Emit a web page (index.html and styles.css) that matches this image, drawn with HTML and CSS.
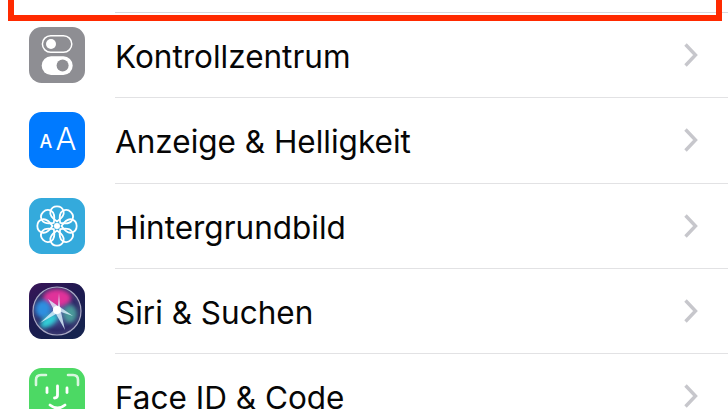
FILE: index.html
```html
<!DOCTYPE html>
<html lang="de">
<head>
<meta charset="utf-8">
<title>Einstellungen</title>
<link rel="stylesheet" href="styles.css">
</head>
<body>
<div class="screen">
  <div class="stub"><div class="stub-line"></div></div>
  <div class="frame"></div>

  <div class="row">
    <svg class="icon" viewBox="0 0 56 56">
      <rect width="56" height="56" rx="12.5" fill="#8e8e93"/>
      <rect x="13.4" y="8.7" width="29.4" height="16.6" rx="8.3" fill="none" stroke="#fff" stroke-width="1.5"/>
      <circle cx="22" cy="17" r="5" fill="#fff"/>
      <rect x="12.7" y="29.3" width="31" height="18.7" rx="9.35" fill="#fff"/>
      <circle cx="33.6" cy="38.6" r="6" fill="#8e8e93"/>
    </svg>
    <div class="body"><span class="label">Kontrollzentrum</span>
      <svg class="chev" viewBox="0 0 16 26"><path d="M2.5 2.5 12.5 13 2.5 23.5"/></svg></div>
  </div>

  <div class="row">
    <svg class="icon" viewBox="0 0 56 56">
      <rect width="56" height="56" rx="12.5" fill="#007aff"/>
      <text x="17" y="36" class="aa small">A</text>
      <text x="37" y="38" class="aa big">A</text>
    </svg>
    <div class="body"><span class="label">Anzeige &amp; Helligkeit</span>
      <svg class="chev" viewBox="0 0 16 26"><path d="M2.5 2.5 12.5 13 2.5 23.5"/></svg></div>
  </div>

  <div class="row">
    <svg class="icon" viewBox="0 0 56 56">
      <rect width="56" height="56" rx="12.5" fill="#34aadc"/>
      <g fill="none" stroke="#fff" stroke-width="1.8" transform="translate(28 28)">
        <circle r="3" fill="#fff" stroke="none"/>
        <path d="M0-4.5C-6.5-9-7-13-6.6-14.5A6.8 6.8 0 0 1 6.6-14.5C7-13 6.5-9 0-4.5Z"/>
        <path d="M0-4.5C-6.5-9-7-13-6.6-14.5A6.8 6.8 0 0 1 6.6-14.5C7-13 6.5-9 0-4.5Z" transform="rotate(45)"/>
        <path d="M0-4.5C-6.5-9-7-13-6.6-14.5A6.8 6.8 0 0 1 6.6-14.5C7-13 6.5-9 0-4.5Z" transform="rotate(90)"/>
        <path d="M0-4.5C-6.5-9-7-13-6.6-14.5A6.8 6.8 0 0 1 6.6-14.5C7-13 6.5-9 0-4.5Z" transform="rotate(135)"/>
        <path d="M0-4.5C-6.5-9-7-13-6.6-14.5A6.8 6.8 0 0 1 6.6-14.5C7-13 6.5-9 0-4.5Z" transform="rotate(180)"/>
        <path d="M0-4.5C-6.5-9-7-13-6.6-14.5A6.8 6.8 0 0 1 6.6-14.5C7-13 6.5-9 0-4.5Z" transform="rotate(225)"/>
        <path d="M0-4.5C-6.5-9-7-13-6.6-14.5A6.8 6.8 0 0 1 6.6-14.5C7-13 6.5-9 0-4.5Z" transform="rotate(270)"/>
        <path d="M0-4.5C-6.5-9-7-13-6.6-14.5A6.8 6.8 0 0 1 6.6-14.5C7-13 6.5-9 0-4.5Z" transform="rotate(315)"/>
      </g>
    </svg>
    <div class="body"><span class="label">Hintergrundbild</span>
      <svg class="chev" viewBox="0 0 16 26"><path d="M2.5 2.5 12.5 13 2.5 23.5"/></svg></div>
  </div>

  <div class="row">
    <svg class="icon" viewBox="0 0 56 56">
      <defs>
        <linearGradient id="sbg" x1="0" y1="0" x2="0.6" y2="1">
          <stop offset="0" stop-color="#3a1558"/><stop offset="0.5" stop-color="#1d1a50"/><stop offset="1" stop-color="#16234f"/>
        </linearGradient>
        <radialGradient id="sdisc" cx="0.5" cy="0.5" r="0.5">
          <stop offset="0" stop-color="#5a6ab0"/><stop offset="0.8" stop-color="#2c2a68"/><stop offset="1" stop-color="#3a3a70"/>
        </radialGradient>
        <filter id="b2" x="-40%" y="-40%" width="180%" height="180%"><feGaussianBlur stdDeviation="2.2"/></filter>
        <filter id="b1" x="-40%" y="-40%" width="180%" height="180%"><feGaussianBlur stdDeviation="0.7"/></filter>
        <clipPath id="sclip"><circle cx="28" cy="28" r="24"/></clipPath>
      </defs>
      <rect width="56" height="56" rx="12.5" fill="url(#sbg)"/>
      <circle cx="28" cy="28" r="24" fill="url(#sdisc)"/>
      <g clip-path="url(#sclip)">
        <ellipse cx="28" cy="15" rx="14" ry="9" fill="#e0309a" filter="url(#b2)"/>
        <ellipse cx="14" cy="26" rx="8" ry="9" fill="#2f8fe0" filter="url(#b2)"/>
        <ellipse cx="41" cy="31" rx="7" ry="9" fill="#4a9a9a" filter="url(#b2)"/>
        <ellipse cx="20" cy="38" rx="10" ry="5" fill="#30d0d8" filter="url(#b2)" transform="rotate(-35 20 38)"/>
        <path d="M30 10 31 24 44 33 32 29 36 47 27 31 11 40 25 27 19 16 29 23Z" fill="#dff6ff" opacity=".8" filter="url(#b1)"/>
        <circle cx="28" cy="27" r="4" fill="#fff" filter="url(#b1)"/>
      </g>
      <circle cx="28" cy="28" r="24" fill="none" stroke="#a9a9c4" stroke-width="1.2"/>
    </svg>
    <div class="body"><span class="label">Siri &amp; Suchen</span>
      <svg class="chev" viewBox="0 0 16 26"><path d="M2.5 2.5 12.5 13 2.5 23.5"/></svg></div>
  </div>

  <div class="row">
    <svg class="icon" viewBox="0 0 56 56">
      <rect width="56" height="56" rx="12.5" fill="#4cd964"/>
      <g fill="none" stroke="#d9f7df" stroke-width="2.6" stroke-linecap="round">
        <path d="M7 17V12Q7 7 12 7H17"/>
        <path d="M39 7H44Q49 7 49 12V17"/>
      </g>
      <g fill="none" stroke="#fff" stroke-width="2.8" stroke-linecap="round">
        <path d="M18 20V24.5"/>
        <path d="M38 20V24.5"/>
        <path d="M28.5 18V27Q28.5 30 25.5 30"/>
        <path d="M21 37Q28.5 43 36 37"/>
      </g>
    </svg>
    <div class="body"><span class="label">Face ID &amp; Code</span>
      <svg class="chev" viewBox="0 0 16 26"><path d="M2.5 2.5 12.5 13 2.5 23.5"/></svg></div>
  </div>
</div>
</body>
</html>
```

FILE: styles.css
```css
html, body {
  margin: 0;
  padding: 0;
  height: 100%;
  overflow: hidden;
  background: #fff;
}

.screen {
  position: relative;
  width: 728px;
  height: 409px;
  overflow: hidden;
  font-family: "Inter", "Liberation Sans", sans-serif;
}

.stub {
  height: 13px;
  padding-left: 115px;
  box-sizing: border-box;
  display: flex;
  align-items: flex-end;
}

.stub-line {
  flex: 1;
  height: 1px;
  background: #d9d9de;
}

.frame {
  position: absolute;
  left: 8px;
  top: -20px;
  width: 714px;
  height: 41px;
  box-sizing: border-box;
  border: 6.5px solid #ff2a00;
}

.row {
  display: flex;
  align-items: center;
  height: 85.33px;
  padding-left: 29px;
  box-sizing: border-box;
}

.icon {
  flex: none;
  width: 56px;
  height: 56px;
  margin-right: 30px;
  margin-bottom: 1.5px;
}

.body {
  flex: 1;
  height: 100%;
  display: flex;
  align-items: center;
  justify-content: space-between;
  padding-right: 29px;
  border-bottom: 1px solid #e2e2e4;
  box-sizing: border-box;
}

.label {
  font-size: 31.5px;
  color: #060606;
  line-height: 1;
  margin-top: 3px;
}

.chev {
  width: 16px;
  height: 26px;
}

.chev path {
  fill: none;
  stroke: #c7c7cc;
  stroke-width: 3.4;
}

.aa {
  fill: #fff;
  font-family: "Inter", "Liberation Sans", sans-serif;
  text-anchor: middle;
}

.small {
  font-size: 18px;
  font-weight: 500;
}

.big {
  font-size: 31px;
  font-weight: 300;
}
```
